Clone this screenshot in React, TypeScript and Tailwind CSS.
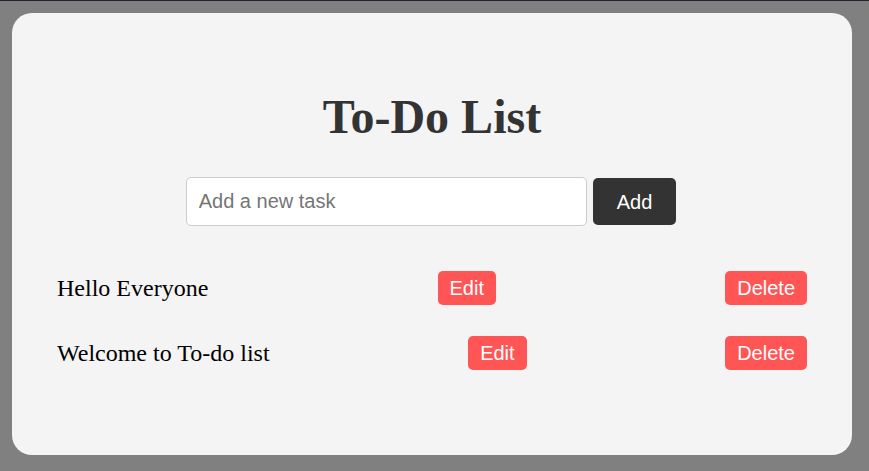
const tasks = ["Hello Everyone", "Welcome to To-do list"];

export default function App() {
  return (
    <div className="min-h-screen bg-[#808080] border-t border-[#1f2430] pt-[12px] pl-[12px]">
      <div className="w-[840px] rounded-[20px] bg-[#f4f4f4] px-[45px] pt-[77px] pb-[85px]">
        <h1
          className="text-center text-[48px] font-bold leading-[53px] text-[#333]"
          style={{ fontFamily: '"Liberation Serif", serif' }}
        >
          To-Do List
        </h1>
        <div
          className="mt-[34px] flex items-center justify-center gap-[6px] pr-[2px]"
          style={{ fontFamily: '"Liberation Sans", Arial, sans-serif' }}
        >
          <input
            type="text"
            placeholder="Add a new task"
            className="h-[49px] w-[401px] rounded-[5px] border border-[#ccc] bg-white px-[12px] text-[20px] text-black outline-none placeholder:text-[#757575]"
          />
          <button className="h-[47px] rounded-[5px] bg-[#333] px-[24px] text-[20px] text-white">
            Add
          </button>
        </div>
        <ul className="mt-[45px] flex flex-col gap-[31px]">
          {tasks.map((t) => (
            <li key={t} className="flex h-[34px] items-center justify-between">
              <span
                className="text-[24px] text-black"
                style={{ fontFamily: '"Liberation Serif", serif' }}
              >
                {t}
              </span>
              <button
                className="h-[34px] rounded-[5px] bg-[#ff5555] px-[12px] text-[20px] text-white"
                style={{ fontFamily: '"Liberation Sans", Arial, sans-serif' }}
              >
                Edit
              </button>
              <button
                className="h-[34px] rounded-[5px] bg-[#ff5555] px-[12px] text-[20px] text-white"
                style={{ fontFamily: '"Liberation Sans", Arial, sans-serif' }}
              >
                Delete
              </button>
            </li>
          ))}
        </ul>
      </div>
    </div>
  );
}
